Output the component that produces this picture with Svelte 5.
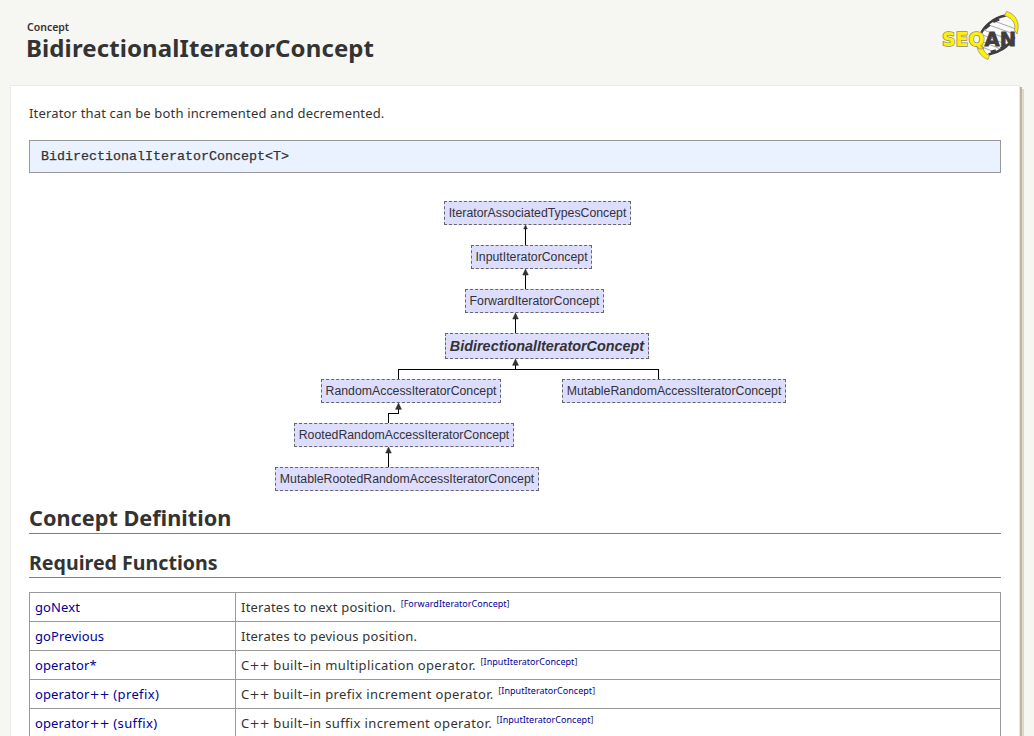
<script>
  const nodes = [
    { name: 'IteratorAssociatedTypesConcept', x: 444, y: 201, w: 187 },
    { name: 'InputIteratorConcept', x: 471, y: 245, w: 121 },
    { name: 'ForwardIteratorConcept', x: 465, y: 289, w: 139 },
    { name: 'BidirectionalIteratorConcept', x: 445, y: 333, w: 204, current: true },
    { name: 'RandomAccessIteratorConcept', x: 321, y: 379, w: 180 },
    { name: 'MutableRandomAccessIteratorConcept', x: 562, y: 379, w: 224 },
    { name: 'RootedRandomAccessIteratorConcept', x: 294, y: 423, w: 220 },
    { name: 'MutableRootedRandomAccessIteratorConcept', x: 275, y: 467, w: 264 },
  ];
  const edges = [
    'M525.5 245V226',
    'M525.5 289V270',
    'M515.5 333V314',
    'M398.5 379V369.5H658.5V379M515.5 369V360',
    'M388.5 423V413.5H398.5V404',
    'M388.5 467V448',
  ];
  const arrows = [[525.5, 225, 0.65], [525.5, 269, 1], [515.5, 313, 1], [515.5, 359, 1.05], [398.5, 403, 1.05], [388.5, 447, 1]];
  const rows = [
    { fn: ['goNext'], text: ['Iterates to next position.'], from: 'ForwardIteratorConcept' },
    { fn: ['goPrevious'], text: ['Iterates to pevious position.'] },
    { fn: ['operator*'], text: ['C', ' built–in multiplication operator.'], from: 'InputIteratorConcept' },
    { fn: ['operator', ' (prefix)'], text: ['C', ' built–in prefix increment operator.'], from: 'InputIteratorConcept' },
    { fn: ['operator', ' (suffix)'], text: ['C', ' built–in suffix increment operator.'], from: 'InputIteratorConcept' },
  ];
</script>

{#snippet plusText(parts)}{parts[0]}{#if parts.length > 1}<span class="plus">++</span><span class="rest">{parts[1]}</span>{/if}{/snippet}

<div class="page">
  <header>
    <div class="title">
      <div class="kind">Concept</div>
      <h1>BidirectionalIteratorConcept</h1>
    </div>
    <svg class="logo" width="80" height="52" viewBox="940 10 80 52" role="img" aria-label="SeqAn">
      <path d="M980 36C983 26 994 16 1006 15L1014 22C1018 38 1005 52 989 55L979 47Z" fill="#fafaf8" />
      <path d="M989 25L1014 34M994 21L1016 29M984 30L1010 40M983 35L1008 45M981 41L1003 50M980 46L994 52" stroke="#a8a8a8" stroke-width="1" />
      <path d="M980 36C983 27 993 17.500 1006 15.500" fill="none" stroke="#403c40" stroke-width="2.500" />
      <path d="M988.500 54.500C1000 52 1009 46 1014.500 37" fill="none" stroke="#403c40" stroke-width="2.500" />
      <path d="M984.500 28.500L989.500 24.500M993 21.500L999 19M991 52.500L996 51M1001 49L1006 45.500" stroke="#403c40" stroke-width="3.500" />
      <path d="M1006.500 11.500C1016 14 1020.500 23 1017 34L1014.500 30C1016 23 1012 18 1004.500 15.500Z" fill="#fff200" stroke="#8f8c68" stroke-width=".7" />
      <path d="M983 43C982 49 985 54 989.500 55.500L988 59.500C981 57 977 51 976.500 44Z" fill="#fff200" stroke="#8f8c68" stroke-width=".7" />
      <text x="942" y="45.500" textLength="42.500" lengthAdjust="spacingAndGlyphs" class="seq">SEQ</text>
      <text x="984.500" y="45.500" textLength="31.500" lengthAdjust="spacingAndGlyphs" class="an">AN</text>
    </svg>
  </header>

  <main>
    <p class="summary">Iterator that can be both incremented and decremented.</p>
    <pre>BidirectionalIteratorConcept&lt;T&gt;</pre>

    <div class="graph">
      <svg width="520" height="296" viewBox="270 198 520 296">
        {#each edges as d}
          <path {d} fill="none" stroke="#000" shape-rendering="crispEdges" />
        {/each}
        {#each arrows as [x, y, s]}
          <path d="M{x} {y}l{2.8 * s} {6 * s}h{-5.6 * s}z" fill="#333" stroke="#222" stroke-width=".5" />
        {/each}
      </svg>
      {#each nodes as n}
        <div class="node" class:current={n.current} style="left:{n.x - 29}px;top:{n.y - 173}px;width:{n.w}px">
          <span>{n.name}</span>
        </div>
      {/each}
    </div>

    <h2>Concept Definition</h2>
    <h3>Required Functions</h3>
    <table>
      <tbody>
        {#each rows as r}
          <tr>
            <td class="fn"><a href="#top">{@render plusText(r.fn)}</a></td>
            <td class="desc">{@render plusText(r.text)}{#if r.from}{' '}<sup>[<a href="#top">{r.from}</a>]</sup>{/if}</td>
          </tr>
        {/each}
      </tbody>
    </table>
  </main>
</div>

<style>
  :global(body) {
    background: #f6f6f2;
    overflow: hidden;
  }
  .page {
    height: 736px;
    overflow: hidden;
    color: #333;
    font-family: 'Noto Sans', 'Open Sans', sans-serif;
    font-size: 13px;
  }
  header {
    display: flex;
    justify-content: space-between;
    height: 85px;
    padding: 0 14px 0 27px;
    box-sizing: border-box;
  }
  .title { padding-top: 20px; }
  .kind {
    font-size: 10.5px;
    line-height: 14px;
    font-weight: 600;
  }
  h1 {
    margin: 0;
    font-size: 24px;
    line-height: 28px;
    font-weight: 700;
    letter-spacing: .1px;
    text-indent: -1px;
  }
  .logo { margin-top: 10px; }
  .logo text {
    font-family: 'DejaVu Sans', sans-serif;
    font-weight: 700;
    font-size: 20px;
  }
  .seq {
    fill: #fff200;
    stroke: #8f8c68;
    stroke-width: 1.6px;
    paint-order: stroke;
  }
  .an { fill: #403c40; stroke: #403c40; stroke-width: .8px; }
  main {
    box-sizing: border-box;
    margin-left: 10px;
    width: 1010px;
    height: 700px;
    padding: 0 18px;
    border: 1px solid #e9e9e7;
    border-right-color: #e9e6de;
    background: #fff;
    box-shadow: 2px 2px 0 #bfb6a1, 4px 4px 0 #dfd8c8;
  }
  .summary {
    margin: 0;
    padding-top: 17px;
    height: 37px;
    line-height: 20px;
    letter-spacing: .165px;
  }
  pre {
    box-sizing: border-box;
    margin: 0;
    height: 33px;
    padding: 0 11px;
    border: 1px solid #999;
    background: #ebf2ff;
    font: 13.34px/31px 'Liberation Mono', monospace;
    -webkit-text-stroke: .25px #333;
  }
  .graph {
    position: relative;
    height: 328px;
  }
  .graph svg {
    position: absolute;
    left: 241px;
    top: 25px;
  }
  .node {
    position: absolute;
    box-sizing: border-box;
    height: 24px;
    border: 1px dashed #666;
    background: #ddf;
    font: 12.3px/22px 'Liberation Sans', Arial, sans-serif;
    white-space: nowrap;
    display: flex;
    justify-content: center;
  }
  .node.current {
    height: 26px;
    font: italic 700 14.4px/24px 'Liberation Sans', Arial, sans-serif;
  }
  h2, h3 {
    box-sizing: border-box;
    margin: 0;
    border-bottom: 1px solid #808080;
    font-weight: 700;
  }
  h2 {
    height: 33px;
    font-size: 21.7px;
    line-height: 34px;
  }
  h3 {
    height: 44px;
    padding-top: 14px;
    font-size: 19.6px;
    line-height: 30px;
  }
  table {
    margin-top: 14px;
    width: 972px;
    border-collapse: collapse;
    table-layout: fixed;
  }
  td {
    box-sizing: border-box;
    height: 29px;
    padding: 0 5px;
    border: 1px solid #999;
    line-height: 20px;
    white-space: nowrap;
  }
  .fn { width: 206px; letter-spacing: .12px; }
  .desc { letter-spacing: .22px; }
  .plus {
    font-family: 'DejaVu Sans', sans-serif;
    font-size: 12px;
    line-height: 0;
    letter-spacing: 0;
  }
  .rest { letter-spacing: .36px; }
  a { color: #009; text-decoration: none; }
  sup {
    margin-left: 1px;
    font-size: 9px;
    line-height: 0;
    letter-spacing: .03px;
    vertical-align: 5px;
  }
</style>
